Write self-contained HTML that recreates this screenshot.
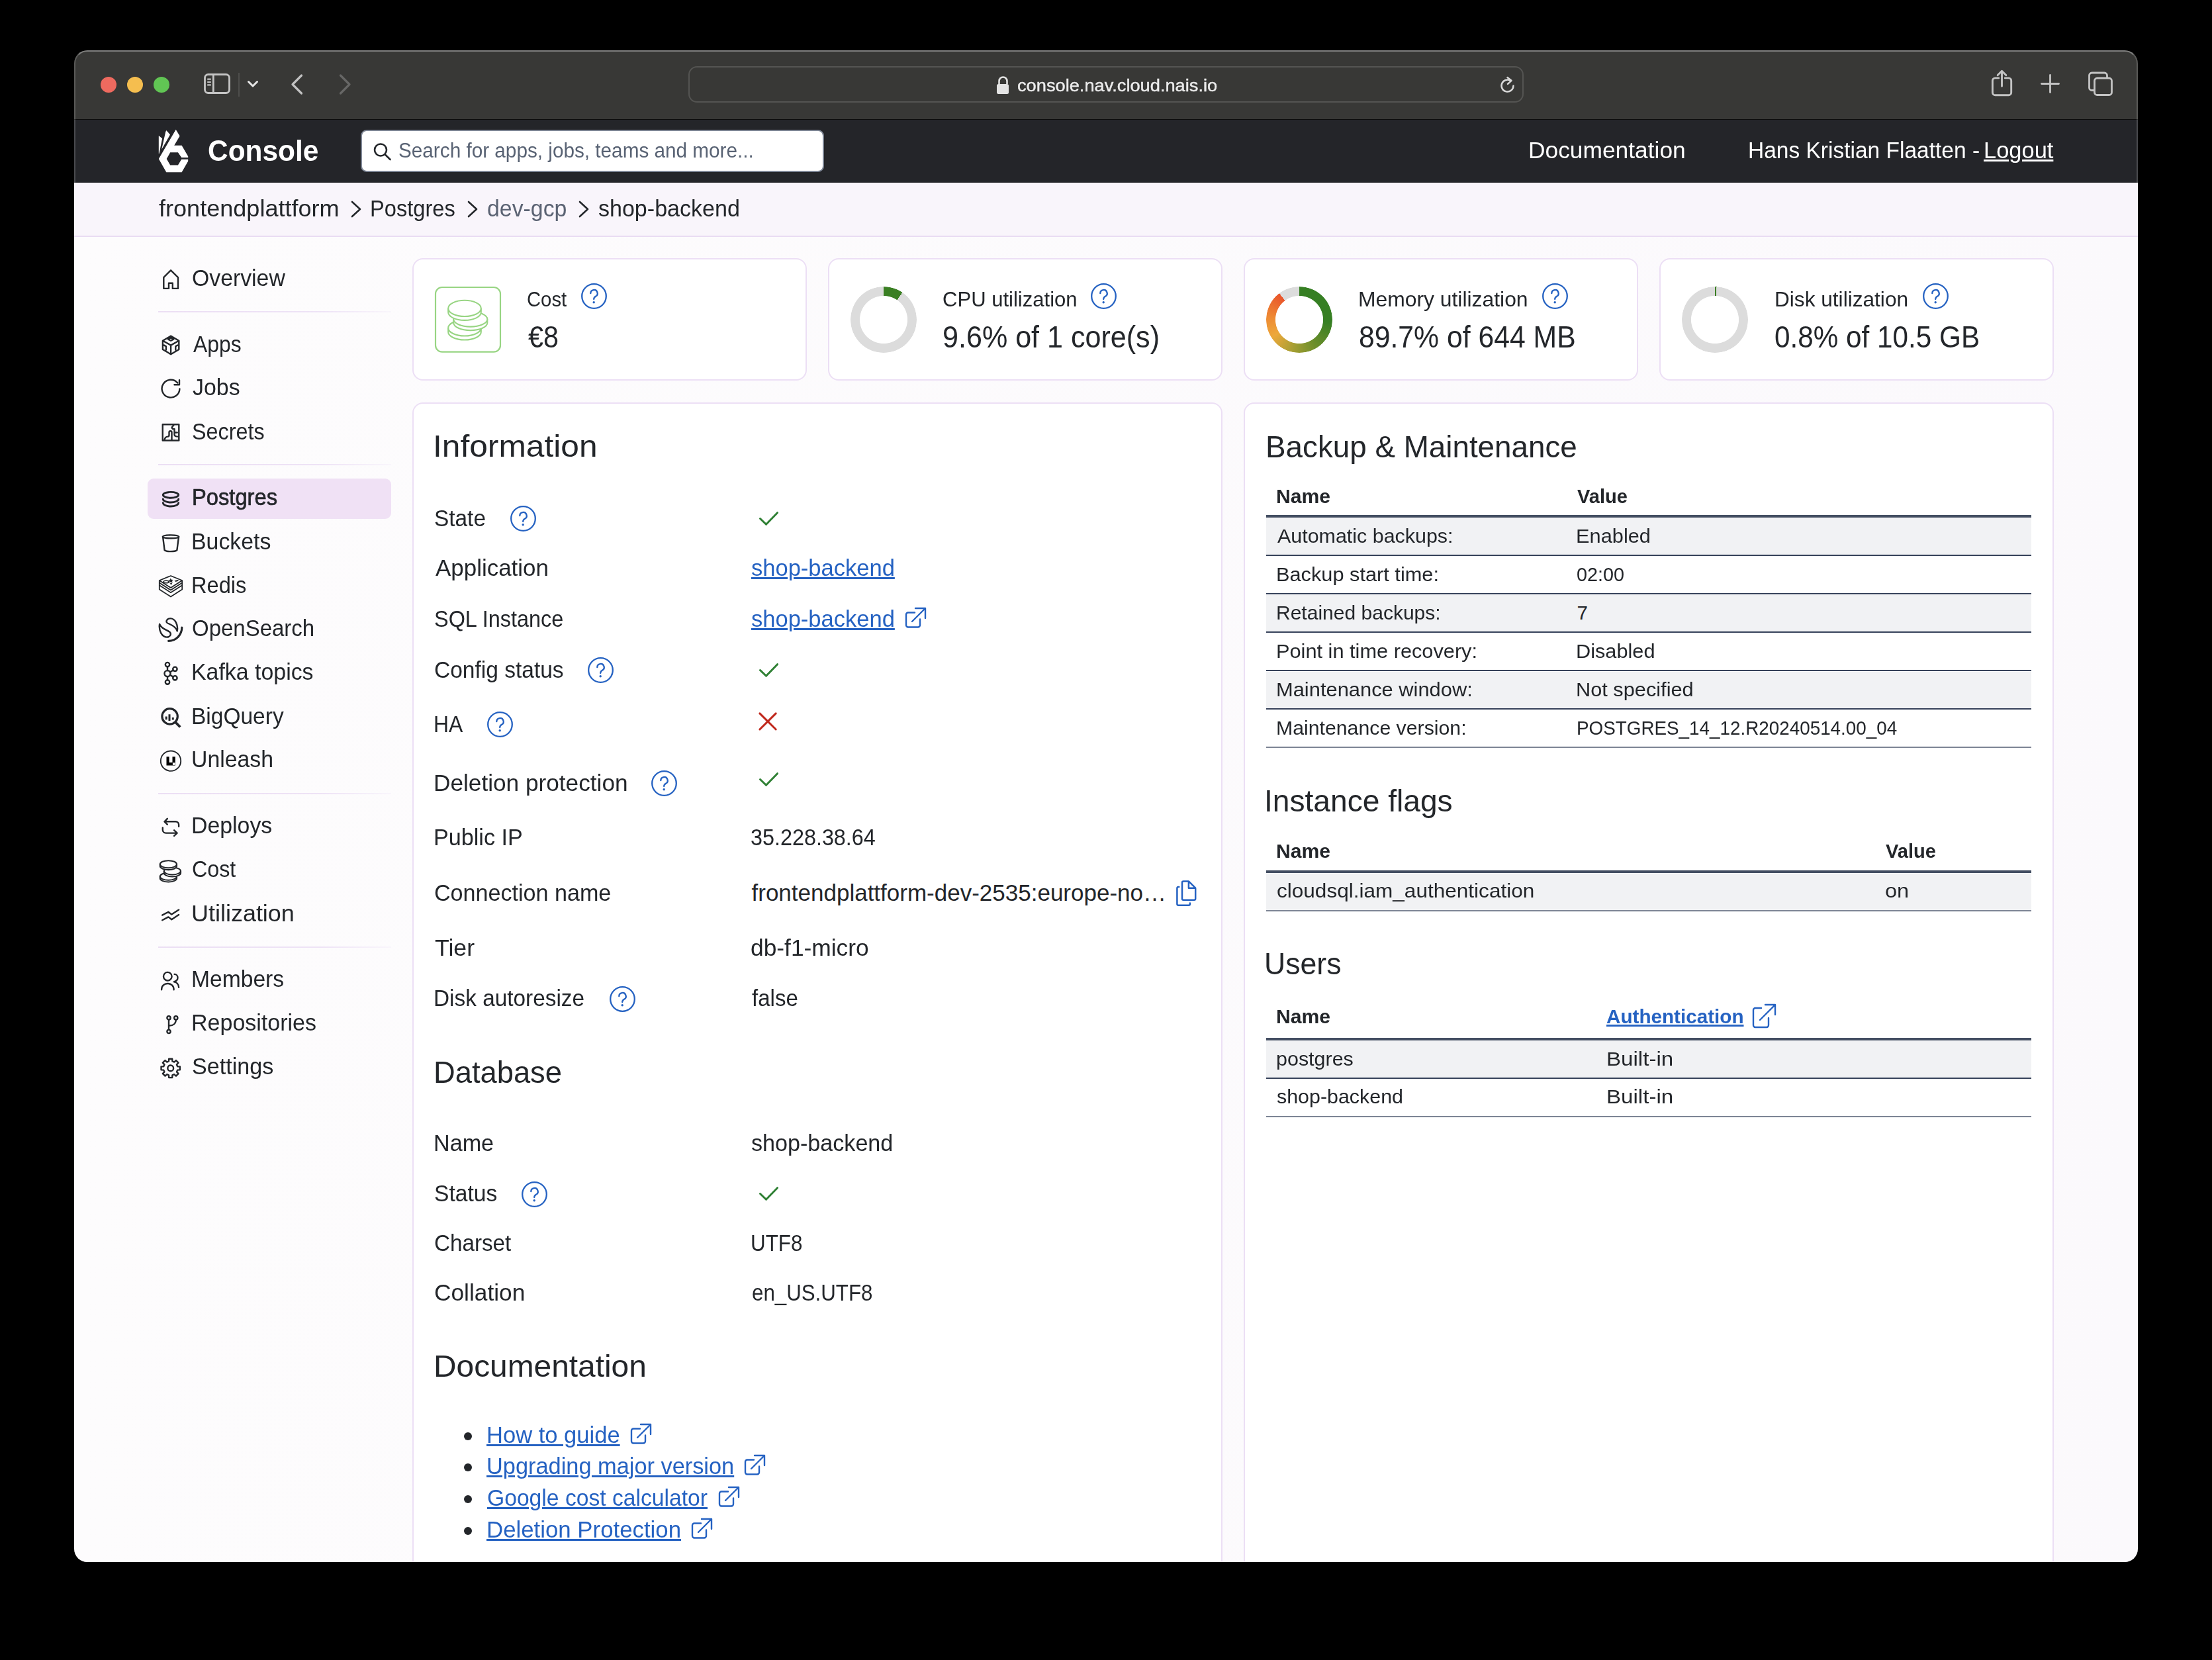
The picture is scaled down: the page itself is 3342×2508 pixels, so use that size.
<!DOCTYPE html>
<html><head><meta charset="utf-8"><title>Console</title>
<style>
html,body{margin:0;padding:0;background:#000;}
body{width:3342px;height:2508px;overflow:hidden;position:relative;font-family:"Liberation Sans",sans-serif;}
#win{position:absolute;left:0;top:0;width:3342px;height:2508px;clip-path:inset(76px 112px 148px 112px round 20px);}
.t{position:absolute;white-space:pre;transform-origin:0 0;}
svg{display:block;}
#t0{transform:scaleX(1.0470);}
#t1{transform:scaleX(0.9425);}
#t2{transform:scaleX(0.9586);}
#t3{transform:scaleX(0.9957);}
#t4{transform:scaleX(0.9437);}
#t5{transform:scaleX(0.9705);}
#t6{transform:scaleX(1.0305);}
#t7{transform:scaleX(0.9328);}
#t8{transform:scaleX(0.9672);}
#t9{transform:scaleX(0.9724);}
#t10{transform:scaleX(0.9653);}
#t11{transform:scaleX(0.9101);}
#t12{transform:scaleX(0.9681);}
#t13{transform:scaleX(0.9233);}
#t14{transform:scaleX(0.9341);}
#t15{transform:scaleX(0.9667);}
#t16{transform:scaleX(0.9318);}
#t17{transform:scaleX(0.9422);}
#t18{transform:scaleX(0.9679);}
#t19{transform:scaleX(0.9573);}
#t20{transform:scaleX(0.9659);}
#t21{transform:scaleX(0.9672);}
#t22{transform:scaleX(0.9214);}
#t23{transform:scaleX(1.0272);}
#t24{transform:scaleX(0.9606);}
#t25{transform:scaleX(0.9716);}
#t26{transform:scaleX(0.9740);}
#t27{transform:scaleX(0.9590);}
#t28{transform:scaleX(0.8980);}
#t29{transform:scaleX(1.0179);}
#t30{transform:scaleX(0.9364);}
#t31{transform:scaleX(1.0438);}
#t32{transform:scaleX(0.9284);}
#t33{transform:scaleX(1.0366);}
#t34{transform:scaleX(0.9189);}
#t35{transform:scaleX(1.0570);}
#t36{transform:scaleX(0.9538);}
#t37{transform:scaleX(0.9982);}
#t38{transform:scaleX(0.9266);}
#t39{transform:scaleX(0.9577);}
#t40{transform:scaleX(0.9089);}
#t41{transform:scaleX(1.0059);}
#t42{transform:scaleX(0.9752);}
#t43{transform:scaleX(0.9742);}
#t44{transform:scaleX(1.0175);}
#t45{transform:scaleX(0.9532);}
#t46{transform:scaleX(0.9862);}
#t47{transform:scaleX(0.9862);}
#t48{transform:scaleX(0.9238);}
#t49{transform:scaleX(1.0000);}
#t50{transform:scaleX(1.0097);}
#t51{transform:scaleX(0.9438);}
#t52{transform:scaleX(0.9641);}
#t53{transform:scaleX(0.9753);}
#t54{transform:scaleX(0.9747);}
#t55{transform:scaleX(0.9604);}
#t56{transform:scaleX(0.9492);}
#t57{transform:scaleX(0.8964);}
#t58{transform:scaleX(1.0083);}
#t59{transform:scaleX(0.8931);}
#t60{transform:scaleX(1.0181);}
#t61{transform:scaleX(0.9870);}
#t62{transform:scaleX(0.9814);}
#t63{transform:scaleX(0.9616);}
#t64{transform:scaleX(0.9942);}
#t65{transform:scaleX(0.9740);}
#t66{transform:scaleX(1.0221);}
#t67{transform:scaleX(0.9868);}
#t68{transform:scaleX(1.0314);}
#t69{transform:scaleX(1.0433);}
#t70{transform:scaleX(1.0418);}
#t71{transform:scaleX(0.9764);}
#t72{transform:scaleX(1.0175);}
#t74{transform:scaleX(1.0418);}
#t75{transform:scaleX(1.0414);}
#t76{transform:scaleX(1.0462);}
#t77{transform:scaleX(1.0419);}
#t78{transform:scaleX(1.0254);}
#t79{transform:scaleX(0.9432);}
#t80{transform:scaleX(0.9813);}
#t81{transform:scaleX(1.0221);}
#t82{transform:scaleX(0.9868);}
#t83{transform:scaleX(1.0693);}
#t84{transform:scaleX(1.1033);}
#t85{transform:scaleX(0.9487);}
#t86{transform:scaleX(1.0221);}
#t87{transform:scaleX(1.0049);}
#t88{transform:scaleX(1.0327);}
#t89{transform:scaleX(1.1221);}
#t90{transform:scaleX(1.0306);}
#t91{transform:scaleX(1.1221);}
</style></head><body><div id="win">
<div style="position:absolute;left:112px;top:357px;width:3118px;height:2003px;background:linear-gradient(90deg,#fdfcfd 0%,#fbf9fc 100%);"></div>
<div style="position:absolute;left:112px;top:76px;width:3118px;height:104px;background:#383836;"></div>
<div style="position:absolute;left:112px;top:180px;width:3118px;height:1px;background:#0c0c0c;"></div>
<div style="position:absolute;left:112px;top:181px;width:3118px;height:95px;background:#242529;"></div>
<div style="position:absolute;left:112px;top:276px;width:3118px;height:80px;background:#f9f5fb;"></div>
<div style="position:absolute;left:112px;top:356px;width:3118px;height:2px;background:#e9dcf3;"></div>
<div style="position:absolute;left:152px;top:116px;width:24px;height:24px;background:#ee6a5f;border-radius:50%;"></div>
<div style="position:absolute;left:192px;top:116px;width:24px;height:24px;background:#f5be4f;border-radius:50%;"></div>
<div style="position:absolute;left:232px;top:116px;width:24px;height:24px;background:#61c554;border-radius:50%;"></div>
<svg style="position:absolute;left:300px;top:104px;" width="56" height="46" viewBox="0 0 56 46"><rect x="9.5" y="8.5" width="37" height="28" rx="5" fill="none" stroke="#c4c4c4" stroke-width="2.8"/><line x1="22.3" y1="8.5" x2="22.3" y2="36.5" stroke="#c4c4c4" stroke-width="2.8"/><g stroke="#c4c4c4" stroke-width="2.2" stroke-linecap="round"><line x1="14" y1="15.6" x2="18" y2="15.6"/><line x1="14" y1="20" x2="18" y2="20"/><line x1="14" y1="24.4" x2="18" y2="24.4"/></g></svg>
<div style="position:absolute;left:360px;top:110px;width:2px;height:36px;background:#4e4e4c;"></div>
<svg style="position:absolute;left:370px;top:118px;" width="24" height="18" viewBox="0 0 24 18"><path d="M5.5 5.5 L12 12 L18.5 5.5" fill="none" stroke="#e6e6e6" stroke-width="3" stroke-linecap="round" stroke-linejoin="round"/></svg>
<svg style="position:absolute;left:432px;top:108px;" width="34" height="38" viewBox="0 0 34 38"><path d="M23.5 6 L10 19.5 L23.5 33" fill="none" stroke="#c2c2c2" stroke-width="3.2" stroke-linecap="round" stroke-linejoin="round"/></svg>
<svg style="position:absolute;left:504px;top:108px;" width="34" height="38" viewBox="0 0 34 38"><path d="M10.5 6 L24 19.5 L10.5 33" fill="none" stroke="#676766" stroke-width="3.2" stroke-linecap="round" stroke-linejoin="round"/></svg>
<div style="position:absolute;left:1040px;top:100px;width:1262px;height:55px;box-sizing:border-box;border:2px solid #545452;border-radius:13px;"></div>
<svg style="position:absolute;left:1500px;top:112px;" width="30" height="34" viewBox="0 0 30 34"><path d="M9.5 15 V10.5 a6 6 0 0 1 12 0 V15" fill="none" stroke="#e3e3e3" stroke-width="2.6"/><rect x="6" y="15" width="18" height="15" rx="2.5" fill="#e3e3e3"/></svg>
<div id="t0" class="t " style="left:1536.95px;top:115.50px;font-size:26px;line-height:26px;color:#ececec;-webkit-text-stroke:0.4px #ececec;">console.nav.cloud.nais.io</div>
<svg style="position:absolute;left:2260px;top:112px;" width="36" height="36" viewBox="0 0 36 36"><path d="M26.5 17.5 a9 9 0 1 1 -4.2 -7.6" fill="none" stroke="#d8d8d8" stroke-width="2.5" stroke-linecap="round"/><path d="M17.5 5 L23.5 9.8 L18 14.8" fill="none" stroke="#d8d8d8" stroke-width="2.5" stroke-linecap="round" stroke-linejoin="round"/></svg>
<svg style="position:absolute;left:2996px;top:100px;" width="56" height="52" viewBox="0 0 56 52"><path d="M23.8 17.9 H18.4 a4 4 0 0 0 -4 4 V39.7 a4 4 0 0 0 4 4 H38.7 a4 4 0 0 0 4 -4 V21.9 a4 4 0 0 0 -4 -4 H33.3" fill="none" stroke="#c4c4c4" stroke-width="2.9" stroke-linecap="round"/><path d="M28.5 30.3 V7.5 M22.2 13.6 L28.5 7.2 L34.8 13.6" fill="none" stroke="#c4c4c4" stroke-width="2.9" stroke-linecap="round" stroke-linejoin="round"/></svg>
<svg style="position:absolute;left:3070px;top:100px;" width="56" height="52" viewBox="0 0 56 52"><path d="M27.5 13.5 V39.5 M14.5 26.5 H40.5" stroke="#c4c4c4" stroke-width="2.8" stroke-linecap="round"/></svg>
<svg style="position:absolute;left:3146px;top:100px;" width="56" height="52" viewBox="0 0 56 52"><path d="M18 36.5 H14.5 a4 4 0 0 1 -4 -4 V14 a4 4 0 0 1 4 -4 H33.5 a4 4 0 0 1 4 4 V17.5" fill="none" stroke="#c4c4c4" stroke-width="2.8"/><rect x="18.5" y="18" width="26" height="25.5" rx="4" fill="none" stroke="#c4c4c4" stroke-width="2.8"/></svg>
<svg style="position:absolute;left:230px;top:190px;" width="70" height="76" viewBox="0 0 70 76"><path fill="#fff" fill-rule="evenodd" d="M35.7 5.7 L41.6 15.6 L33.2 29.7 L44.6 29.8 L54.2 46.3 V48.1 H44.2 L38.9 40.3 H27.2 L21.7 49.9 L27.2 59.5 H38.9 L44.2 50.8 H54.2 V53.5 L44.6 70.2 H21.3 L9.8 49.9 Z"/><path fill="#fff" d="M9.8 14.9 L15.1 19.2 L10.5 42.1 L9.8 42.1 Z"/><path fill="#fff" d="M21.3 6.9 L27 13.5 L14.2 35.7 L20.2 9.2 Z"/></svg>
<div id="t1" class="t " style="left:314.11px;top:205.25px;font-size:45px;line-height:45px;color:#ffffff;font-weight:700;">Console</div>
<div style="position:absolute;left:545px;top:196px;width:700px;height:64px;box-sizing:border-box;background:#fff;border:2.5px solid #7d8594;border-radius:9px;"></div>
<svg style="position:absolute;left:558px;top:210px;" width="40" height="40" viewBox="0 0 40 40"><circle cx="17" cy="16.5" r="9" fill="none" stroke="#23262a" stroke-width="2.6"/><path d="M23.6 23.2 L31.5 31" stroke="#23262a" stroke-width="2.6" stroke-linecap="round"/></svg>
<div id="t2" class="t " style="left:602.28px;top:211.65px;font-size:31px;line-height:31px;color:#596374;">Search for apps, jobs, teams and more...</div>
<div id="t3" class="t " style="left:2309.01px;top:209.82px;font-size:35.5px;line-height:35.5px;color:#ffffff;">Documentation</div>
<div id="t4" class="t " style="left:2641.17px;top:209.82px;font-size:35.5px;line-height:35.5px;color:#ffffff;">Hans Kristian Flaatten -</div>
<div id="t5" class="t " style="left:2996.69px;top:209.82px;font-size:35.5px;line-height:35.5px;color:#ffffff;text-decoration:underline;text-decoration-thickness:2.8px;text-underline-offset:1.5px;">Logout</div>
<div id="t6" class="t " style="left:240.20px;top:296.65px;font-size:35px;line-height:35px;color:#23262a;">frontendplattform</div>
<svg style="position:absolute;left:528px;top:301px;" width="20" height="30" viewBox="0 0 20 30"><path d="M4 4 L16 15.0 L4 26" fill="none" stroke="#23262a" stroke-width="2.6" stroke-linecap="round" stroke-linejoin="round"/></svg>
<div id="t7" class="t " style="left:559.20px;top:296.65px;font-size:35px;line-height:35px;color:#23262a;">Postgres</div>
<svg style="position:absolute;left:704px;top:301px;" width="20" height="30" viewBox="0 0 20 30"><path d="M4 4 L16 15.0 L4 26" fill="none" stroke="#23262a" stroke-width="2.6" stroke-linecap="round" stroke-linejoin="round"/></svg>
<div id="t8" class="t " style="left:736.03px;top:296.65px;font-size:35px;line-height:35px;color:#5b6373;">dev-gcp</div>
<svg style="position:absolute;left:872px;top:301px;" width="20" height="30" viewBox="0 0 20 30"><path d="M4 4 L16 15.0 L4 26" fill="none" stroke="#23262a" stroke-width="2.6" stroke-linecap="round" stroke-linejoin="round"/></svg>
<div id="t9" class="t " style="left:904.03px;top:296.65px;font-size:35px;line-height:35px;color:#23262a;">shop-backend</div>
<div style="position:absolute;left:223px;top:722.5px;width:368px;height:61px;background:#f0e1f5;border-radius:9px;"></div>
<div id="t10" class="t " style="left:290.27px;top:402.05px;font-size:35px;line-height:35px;color:#23262a;">Overview</div>
<div id="t11" class="t " style="left:292.20px;top:501.55px;font-size:35px;line-height:35px;color:#23262a;">Apps</div>
<div id="t12" class="t " style="left:291.23px;top:566.65px;font-size:35px;line-height:35px;color:#23262a;">Jobs</div>
<div id="t13" class="t " style="left:290.35px;top:633.65px;font-size:35px;line-height:35px;color:#23262a;">Secrets</div>
<div id="t14" class="t " style="left:290.33px;top:733.25px;font-size:35px;line-height:35px;color:#23262a;-webkit-text-stroke:0.7px #23262a;">Postgres</div>
<div id="t15" class="t " style="left:289.30px;top:799.85px;font-size:35px;line-height:35px;color:#23262a;">Buckets</div>
<div id="t16" class="t " style="left:289.40px;top:866.25px;font-size:35px;line-height:35px;color:#23262a;">Redis</div>
<div id="t17" class="t " style="left:290.32px;top:931.25px;font-size:35px;line-height:35px;color:#23262a;">OpenSearch</div>
<div id="t18" class="t " style="left:289.30px;top:997.25px;font-size:35px;line-height:35px;color:#23262a;">Kafka topics</div>
<div id="t19" class="t " style="left:289.33px;top:1063.95px;font-size:35px;line-height:35px;color:#23262a;">BigQuery</div>
<div id="t20" class="t " style="left:289.30px;top:1129.25px;font-size:35px;line-height:35px;color:#23262a;">Unleash</div>
<div id="t21" class="t " style="left:289.30px;top:1229.25px;font-size:35px;line-height:35px;color:#23262a;">Deploys</div>
<div id="t22" class="t " style="left:290.36px;top:1295.25px;font-size:35px;line-height:35px;color:#23262a;">Cost</div>
<div id="t23" class="t " style="left:289.12px;top:1361.75px;font-size:35px;line-height:35px;color:#23262a;">Utilization</div>
<div id="t24" class="t " style="left:289.32px;top:1461.25px;font-size:35px;line-height:35px;color:#23262a;">Members</div>
<div id="t25" class="t " style="left:289.29px;top:1526.85px;font-size:35px;line-height:35px;color:#23262a;">Repositories</div>
<div id="t26" class="t " style="left:290.25px;top:1593.25px;font-size:35px;line-height:35px;color:#23262a;">Settings</div>
<div style="position:absolute;left:239px;top:470px;width:352px;height:2px;background:linear-gradient(90deg,#ecdff4 0%,#eee3f6 70%,rgba(240,232,248,0.3) 100%);"></div>
<div style="position:absolute;left:239px;top:701.4px;width:352px;height:2px;background:linear-gradient(90deg,#ecdff4 0%,#eee3f6 70%,rgba(240,232,248,0.3) 100%);"></div>
<div style="position:absolute;left:239px;top:1197.8px;width:352px;height:2px;background:linear-gradient(90deg,#ecdff4 0%,#eee3f6 70%,rgba(240,232,248,0.3) 100%);"></div>
<div style="position:absolute;left:239px;top:1429.5px;width:352px;height:2px;background:linear-gradient(90deg,#ecdff4 0%,#eee3f6 70%,rgba(240,232,248,0.3) 100%);"></div>
<svg style="position:absolute;left:240px;top:401.8px;overflow:visible;" width="40" height="40" viewBox="0 0 40 40"><path fill="none" stroke="#23262a" stroke-width="2.4" stroke-linejoin="round" stroke-linecap="round" stroke-linejoin="miter" d="M18.1 6.3 L7.3 17.1 V33.9 H15 V25.7 H20.8 V33.9 H29 V17.1 Z"/></svg>
<svg style="position:absolute;left:240px;top:501.29999999999995px;overflow:visible;" width="40" height="40" viewBox="0 0 40 40"><path fill="none" stroke="#23262a" stroke-width="2.4" stroke-linejoin="round" stroke-linecap="round" d="M18.1 6.6 L30.3 13.8 V27 L18.1 34.2 L5.9 27 V13.8 Z M5.9 13.8 L18.1 20.6 L30.3 13.8 M18.1 20.6 V34.2 M14.1 11.6 L18.1 9.3 L22.1 11.6 L18.1 13.8 Z M7.9 20.6 L10.9 22.3 V27.6 M28.3 20.6 L25.3 22.3 V27.6"/></svg>
<svg style="position:absolute;left:240px;top:566.4px;overflow:visible;" width="40" height="40" viewBox="0 0 40 40"><path fill="none" stroke="#23262a" stroke-width="2.4" stroke-linejoin="round" stroke-linecap="round" d="M31.4 21.4 A13.4 13.4 0 1 1 28.3 12.6"/><path fill="none" stroke="#23262a" stroke-width="2.4" stroke-linejoin="round" stroke-linecap="round" d="M31 8.1 V15.3 H23.5"/></svg>
<svg style="position:absolute;left:240px;top:633.4px;overflow:visible;" width="40" height="40" viewBox="0 0 40 40"><rect fill="none" stroke="#23262a" stroke-width="2.4" stroke-linejoin="round" stroke-linecap="round" x="5.75" y="8.2" width="24.55" height="24.3"/><path fill="none" stroke="#23262a" stroke-width="2.4" stroke-linejoin="round" stroke-linecap="round" d="M8.6 31.4 C9 28 11 26.8 13.7 26.6 C15 26.5 15.5 25.5 15.5 24 V19.8 C15.5 18.8 16.5 18.3 17.5 18.3 C18.6 18.3 19.5 19 19.5 20 V31.4 M22.4 9.3 L19.8 12.4 C19.5 13.5 20.5 15.1 21.5 15.1 H23.5 V23.4 C23.5 25.5 26 26.6 29.2 26.6 M24.9 20.5 H27.8"/></svg>
<svg style="position:absolute;left:240px;top:733px;overflow:visible;" width="40" height="40" viewBox="0 0 40 40"><ellipse fill="none" stroke="#23262a" stroke-width="2.9" stroke-linejoin="round" stroke-linecap="round" cx="18" cy="14.8" rx="11.7" ry="4.4"/><path fill="none" stroke="#23262a" stroke-width="2.9" stroke-linejoin="round" stroke-linecap="round" d="M6.3 21 A11.7 5 0 0 0 29.7 21 M6.3 26.8 A11.7 5.2 0 0 0 29.7 26.8"/></svg>
<svg style="position:absolute;left:240px;top:799.6px;overflow:visible;" width="40" height="40" viewBox="0 0 40 40"><path fill="none" stroke="#23262a" stroke-width="2.4" stroke-linejoin="round" stroke-linecap="round" d="M5.8 11 C7 7.5 29 7.5 30.3 11 C29 14 7 14 5.8 11 Z M6.2 12 L8.6 31.2 C12 33.8 24 33.8 27.4 31.2 L29.9 12"/></svg>
<svg style="position:absolute;left:240px;top:866px;overflow:visible;" width="40" height="40" viewBox="0 0 40 40"><g fill="none" stroke="#23262a" stroke-width="1.8" stroke-linejoin="round"><path fill="#fff" d="M0.8 11 V24.5 L18 35.5 L35.2 24.5 V11 L18 4 Z"/><path d="M0.8 11 L18 22 L35.2 11 M0.8 14.6 L18 25.6 L35.2 14.6 M0.8 18.3 L18 29.3 L35.2 18.3"/></g><path fill="#23262a" d="M17.5 7.5 l1.6 2.2 2.6 0.2 -1.7 1.8 0.6 2.5 -2.4 -1 -2.3 1.2 0.4 -2.6 -1.9 -1.8 2.6 -0.3 z M23.5 11.5 l4.8 -1.4 2 1.3 -4.8 1.5 z"/><ellipse cx="11" cy="13" rx="4" ry="1.8" fill="none" stroke="#23262a" stroke-width="1.6"/><path fill="#23262a" d="M16.5 15.5 L20.5 14.2 L18.8 17.8 Z"/></svg>
<svg style="position:absolute;left:240px;top:931px;overflow:visible;" width="40" height="40" viewBox="0 0 40 40"><path fill="none" stroke="#23262a" stroke-width="2.4" stroke-linejoin="round" stroke-linecap="round" stroke-width="2" d="M27.7 22.5 C29.5 13 24.5 3.4 17.5 3.4 C13 3.4 10.5 7 12 9.5 C13.5 12 25 13 27.7 22.5 Z M1.1 12 C-0.5 22 5 31.6 12 31.6 C17 31.6 19 27.5 17 24.5 C14.5 21 4 20 1.1 12 Z"/><path fill="none" stroke="#23262a" stroke-width="3.2" stroke-linecap="round" d="M34.8 17 C34.8 28 26 37.3 14.6 37.3"/></svg>
<svg style="position:absolute;left:240px;top:997px;overflow:visible;" width="40" height="40" viewBox="0 0 40 40"><g fill="none" stroke="#23262a" stroke-width="2.4" stroke-linejoin="round" stroke-linecap="round" stroke-width="2.6"><circle cx="13" cy="7.1" r="3.2"/><circle cx="13" cy="33.6" r="3.2"/><circle cx="13" cy="20.6" r="4.5"/><circle cx="24.4" cy="13.8" r="3.2"/><circle cx="24.4" cy="27.3" r="3.2"/><path d="M13 10.3 V16.1 M13 25.1 V30.4 M16.9 18.4 L21.6 15.5 M16.9 22.8 L21.6 25.6"/></g></svg>
<svg style="position:absolute;left:240px;top:1063.7px;overflow:visible;" width="40" height="40" viewBox="0 0 40 40"><circle fill="none" stroke="#23262a" stroke-width="3.2" cx="16.6" cy="18.4" r="11.7"/><path stroke="#23262a" stroke-width="3.8" stroke-linecap="butt" d="M25 27.2 L32.3 34.5"/><path stroke="#23262a" stroke-width="3" d="M11.2 18.4 V23.3 M16 15.2 V24.9 M21.3 20 V23.6"/></svg>
<svg style="position:absolute;left:240px;top:1129px;overflow:visible;" width="40" height="40" viewBox="0 0 40 40"><circle fill="none" stroke="#23262a" stroke-width="1.9" cx="18" cy="20.7" r="15.2"/><path fill="#000" d="M11.5 14.3 H15.6 V22.9 H20.5 V14.3 H24.8 V27.6 H11.5 Z"/><rect x="20.9" y="23.3" width="3.5" height="3.6" fill="#fff"/></svg>
<svg style="position:absolute;left:240px;top:1229px;overflow:visible;" width="40" height="40" viewBox="0 0 40 40"><path fill="none" stroke="#23262a" stroke-width="2.4" stroke-linejoin="round" stroke-linecap="round" d="M9 12.3 H25.3 C28 12.3 30.1 14.3 30.1 17 V19.8 M12.8 7.8 L8.5 12.3 L12.8 16.6 M5.8 21.5 V24.8 C5.8 27.5 8 29.6 10.7 29.6 H27.4 M23.1 25.3 L27.6 29.6 L23.1 33.9"/></svg>
<svg style="position:absolute;left:240px;top:1295px;overflow:visible;" width="40" height="40" viewBox="0 0 40 40"><g fill="#fff" stroke="#23262a" stroke-width="2.1"><path d="M1.8 29.2 V32 A12.6 5.5 0 0 0 27 32 V29.2"/><ellipse cx="14.4" cy="29.2" rx="12.6" ry="5.5"/><path d="M7.8 21 V24 A12.6 5.5 0 0 0 33 24 V21"/><ellipse cx="20.4" cy="21" rx="12.6" ry="5.5"/><path d="M1.8 10.7 V13.6 A12.6 5.5 0 0 0 27 13.6 V10.7"/><ellipse cx="14.4" cy="10.7" rx="12.6" ry="5.5"/></g></svg>
<svg style="position:absolute;left:240px;top:1361.5px;overflow:visible;" width="40" height="40" viewBox="0 0 40 40"><path fill="none" stroke="#23262a" stroke-width="2.4" stroke-linejoin="round" stroke-linecap="round" stroke-width="2.7" stroke-linejoin="miter" d="M5.2 20.6 L14.4 15.8 L19.3 19.6 L30.1 12.5 M5.2 28.2 L14.4 23.4 L19.3 27.2 L30.1 20.1"/></svg>
<svg style="position:absolute;left:240px;top:1461px;overflow:visible;" width="40" height="40" viewBox="0 0 40 40"><circle fill="none" stroke="#23262a" stroke-width="2.4" stroke-linejoin="round" stroke-linecap="round" cx="13.3" cy="14.2" r="6.3"/><path fill="none" stroke="#23262a" stroke-width="2.4" stroke-linejoin="round" stroke-linecap="round" d="M4.1 34.2 C4.1 28.5 8.2 25 13.3 25 C18.4 25 22.6 28.5 22.6 34.2 M23.6 10.9 C26.5 11 28.5 13.3 28.5 16.3 C28.5 19.5 26 21.5 22.8 22.3 C26.8 23 30.1 26 30.1 30.8"/></svg>
<svg style="position:absolute;left:240px;top:1526.6px;overflow:visible;" width="40" height="40" viewBox="0 0 40 40"><g fill="none" stroke="#23262a" stroke-width="2.4" stroke-linejoin="round" stroke-linecap="round"><circle cx="15" cy="10.9" r="2.6"/><circle cx="15" cy="31.5" r="2.6"/><circle cx="25.8" cy="10.9" r="2.6"/><path d="M15 13.5 V28.9 M25.8 13.5 C25.8 19.5 21.5 22.8 15.3 22.8"/></g></svg>
<svg style="position:absolute;left:240px;top:1593px;overflow:visible;" width="40" height="40" viewBox="0 0 40 40"><circle fill="none" stroke="#23262a" stroke-width="2.4" stroke-linejoin="round" stroke-linecap="round" cx="17.7" cy="20.9" r="4.4"/><path fill="none" stroke="#23262a" stroke-width="2.4" stroke-linejoin="round" stroke-linecap="round" d="M15.00 10.44 L15.20 6.72 L20.20 6.72 L20.40 10.44 L23.18 11.59 L25.96 9.10 L29.50 12.64 L27.01 15.42 L28.16 18.20 L31.88 18.40 L31.88 23.40 L28.16 23.60 L27.01 26.38 L29.50 29.16 L25.96 32.70 L23.18 30.21 L20.40 31.36 L20.20 35.08 L15.20 35.08 L15.00 31.36 L12.22 30.21 L9.44 32.70 L5.90 29.16 L8.39 26.38 L7.24 23.60 L3.52 23.40 L3.52 18.40 L7.24 18.20 L8.39 15.42 L5.90 12.64 L9.44 9.10 L12.22 11.59 Z"/></svg>
<div style="position:absolute;left:623px;top:390px;width:596px;height:185px;box-sizing:border-box;background:#fff;border:2px solid #ecdff5;border-radius:16px;"></div>
<div style="position:absolute;left:1251px;top:390px;width:596px;height:185px;box-sizing:border-box;background:#fff;border:2px solid #ecdff5;border-radius:16px;"></div>
<div style="position:absolute;left:1879px;top:390px;width:596px;height:185px;box-sizing:border-box;background:#fff;border:2px solid #ecdff5;border-radius:16px;"></div>
<div style="position:absolute;left:2507px;top:390px;width:596px;height:185px;box-sizing:border-box;background:#fff;border:2px solid #ecdff5;border-radius:16px;"></div>
<svg style="position:absolute;left:650px;top:425px;" width="115" height="115" viewBox="0 0 115 115"><rect x="8" y="9" width="98" height="97.7" rx="10" fill="none" stroke="#98d583" stroke-width="2.2"/><g fill="#fff" stroke="#98d583" stroke-width="2.1"><path d="M27.2 70.5 V76.5 A24.8 12 0 0 0 76.8 76.5 V70.5"/><ellipse cx="52" cy="70.5" rx="24.8" ry="12"/><path d="M35.3 57.3 V62.8 A25.5 11.3 0 0 0 86.3 62.8 V57.3"/><ellipse cx="60.8" cy="57.3" rx="25.5" ry="11.3"/><path d="M27.2 40.9 V46.8 A24.8 12.1 0 0 0 76.8 46.8 V40.9"/><ellipse cx="52" cy="40.9" rx="24.8" ry="12.1"/></g></svg>
<div id="t27" class="t " style="left:796.08px;top:436.57px;font-size:30.5px;line-height:30.5px;color:#23262a;">Cost</div>
<svg style="position:absolute;left:878.4px;top:428.2px;" width="39" height="39" viewBox="0 0 39 39"><circle cx="19.5" cy="19.5" r="18.3" fill="none" stroke="#2562c2" stroke-width="2.3"/><path d="M14.3 15.2 a5.2 5.2 0 1 1 7.6 4.6 C19.7 21.0 19.2 22.3 19.2 24.1" fill="none" stroke="#2562c2" stroke-width="2.3" stroke-linecap="round"/><circle cx="19.2" cy="28.8" r="1.7" fill="#2562c2"/></svg>
<div id="t28" class="t " style="left:798.00px;top:486.40px;font-size:46px;line-height:46px;color:#23262a;">€8</div>
<div style="position:absolute;left:1285.2px;top:433.2px;width:99.6px;height:99.6px;border-radius:50%;background:conic-gradient(#3a7f23 0deg 34.6deg,#dcdcdc 34.6deg 360deg);-webkit-mask:radial-gradient(circle,transparent 35.6px,#000 36.4px);mask:radial-gradient(circle,transparent 35.6px,#000 36.4px);"></div>
<div id="t29" class="t " style="left:1423.96px;top:436.57px;font-size:30.5px;line-height:30.5px;color:#23262a;">CPU utilization</div>
<svg style="position:absolute;left:1648.1px;top:428.2px;" width="39" height="39" viewBox="0 0 39 39"><circle cx="19.5" cy="19.5" r="18.3" fill="none" stroke="#2562c2" stroke-width="2.3"/><path d="M14.3 15.2 a5.2 5.2 0 1 1 7.6 4.6 C19.7 21.0 19.2 22.3 19.2 24.1" fill="none" stroke="#2562c2" stroke-width="2.3" stroke-linecap="round"/><circle cx="19.2" cy="28.8" r="1.7" fill="#2562c2"/></svg>
<div id="t30" class="t " style="left:1424.13px;top:486.40px;font-size:46px;line-height:46px;color:#23262a;">9.6% of 1 core(s)</div>
<div style="position:absolute;left:1913.2px;top:433.2px;width:99.6px;height:99.6px;border-radius:50%;background:conic-gradient(#367f23 0deg,#367f23 95deg,#6f8f2c 150deg,#a39e33 190deg,#eda83b 238deg,#ee8a33 275deg,#e9552b 323deg,#dcdcdc 323deg 360deg);-webkit-mask:radial-gradient(circle,transparent 35.6px,#000 36.4px);mask:radial-gradient(circle,transparent 35.6px,#000 36.4px);"></div>
<div id="t31" class="t " style="left:2052.31px;top:436.57px;font-size:30.5px;line-height:30.5px;color:#23262a;">Memory utilization</div>
<svg style="position:absolute;left:2329.5px;top:428.2px;" width="39" height="39" viewBox="0 0 39 39"><circle cx="19.5" cy="19.5" r="18.3" fill="none" stroke="#2562c2" stroke-width="2.3"/><path d="M14.3 15.2 a5.2 5.2 0 1 1 7.6 4.6 C19.7 21.0 19.2 22.3 19.2 24.1" fill="none" stroke="#2562c2" stroke-width="2.3" stroke-linecap="round"/><circle cx="19.2" cy="28.8" r="1.7" fill="#2562c2"/></svg>
<div id="t32" class="t " style="left:2052.54px;top:486.40px;font-size:46px;line-height:46px;color:#23262a;">89.7% of 644 MB</div>
<div style="position:absolute;left:2541.2px;top:433.2px;width:99.6px;height:99.6px;border-radius:50%;background:conic-gradient(#3a7f23 0deg 2.9deg,#dcdcdc 2.9deg 360deg);-webkit-mask:radial-gradient(circle,transparent 35.6px,#000 36.4px);mask:radial-gradient(circle,transparent 35.6px,#000 36.4px);"></div>
<div id="t33" class="t " style="left:2680.93px;top:436.57px;font-size:30.5px;line-height:30.5px;color:#23262a;">Disk utilization</div>
<svg style="position:absolute;left:2904.5px;top:428.2px;" width="39" height="39" viewBox="0 0 39 39"><circle cx="19.5" cy="19.5" r="18.3" fill="none" stroke="#2562c2" stroke-width="2.3"/><path d="M14.3 15.2 a5.2 5.2 0 1 1 7.6 4.6 C19.7 21.0 19.2 22.3 19.2 24.1" fill="none" stroke="#2562c2" stroke-width="2.3" stroke-linecap="round"/><circle cx="19.2" cy="28.8" r="1.7" fill="#2562c2"/></svg>
<div id="t34" class="t " style="left:2681.16px;top:486.40px;font-size:46px;line-height:46px;color:#23262a;">0.8% of 10.5 GB</div>
<div style="position:absolute;left:623px;top:608px;width:1224px;height:1800px;box-sizing:border-box;background:#fff;border:2px solid #ecdff5;border-radius:16px;"></div>
<div style="position:absolute;left:1879px;top:608px;width:1224px;height:1800px;box-sizing:border-box;background:#fff;border:2px solid #ecdff5;border-radius:16px;"></div>
<div id="t35" class="t " style="left:654.37px;top:650.45px;font-size:47px;line-height:47px;color:#23262a;">Information</div>
<div id="t36" class="t " style="left:656.09px;top:764.85px;font-size:35px;line-height:35px;color:#23262a;">State</div>
<svg style="position:absolute;left:770.5px;top:764.3000000000001px;" width="39" height="39" viewBox="0 0 39 39"><circle cx="19.5" cy="19.5" r="18.3" fill="none" stroke="#2562c2" stroke-width="2.3"/><path d="M14.3 15.2 a5.2 5.2 0 1 1 7.6 4.6 C19.7 21.0 19.2 22.3 19.2 24.1" fill="none" stroke="#2562c2" stroke-width="2.3" stroke-linecap="round"/><circle cx="19.2" cy="28.8" r="1.7" fill="#2562c2"/></svg>
<div id="t37" class="t " style="left:658.00px;top:840.25px;font-size:35px;line-height:35px;color:#23262a;">Application</div>
<div id="t38" class="t " style="left:656.15px;top:917.15px;font-size:35px;line-height:35px;color:#23262a;">SQL Instance</div>
<div id="t39" class="t " style="left:656.08px;top:993.85px;font-size:35px;line-height:35px;color:#23262a;">Config status</div>
<svg style="position:absolute;left:888.3px;top:993.3000000000001px;" width="39" height="39" viewBox="0 0 39 39"><circle cx="19.5" cy="19.5" r="18.3" fill="none" stroke="#2562c2" stroke-width="2.3"/><path d="M14.3 15.2 a5.2 5.2 0 1 1 7.6 4.6 C19.7 21.0 19.2 22.3 19.2 24.1" fill="none" stroke="#2562c2" stroke-width="2.3" stroke-linecap="round"/><circle cx="19.2" cy="28.8" r="1.7" fill="#2562c2"/></svg>
<div id="t40" class="t " style="left:655.27px;top:1075.55px;font-size:35px;line-height:35px;color:#23262a;">HA</div>
<svg style="position:absolute;left:736.3px;top:1075.0px;" width="39" height="39" viewBox="0 0 39 39"><circle cx="19.5" cy="19.5" r="18.3" fill="none" stroke="#2562c2" stroke-width="2.3"/><path d="M14.3 15.2 a5.2 5.2 0 1 1 7.6 4.6 C19.7 21.0 19.2 22.3 19.2 24.1" fill="none" stroke="#2562c2" stroke-width="2.3" stroke-linecap="round"/><circle cx="19.2" cy="28.8" r="1.7" fill="#2562c2"/></svg>
<div id="t41" class="t " style="left:654.98px;top:1164.85px;font-size:35px;line-height:35px;color:#23262a;">Deletion protection</div>
<svg style="position:absolute;left:984.2px;top:1164.3px;" width="39" height="39" viewBox="0 0 39 39"><circle cx="19.5" cy="19.5" r="18.3" fill="none" stroke="#2562c2" stroke-width="2.3"/><path d="M14.3 15.2 a5.2 5.2 0 1 1 7.6 4.6 C19.7 21.0 19.2 22.3 19.2 24.1" fill="none" stroke="#2562c2" stroke-width="2.3" stroke-linecap="round"/><circle cx="19.2" cy="28.8" r="1.7" fill="#2562c2"/></svg>
<div id="t42" class="t " style="left:655.07px;top:1247.25px;font-size:35px;line-height:35px;color:#23262a;">Public IP</div>
<div id="t43" class="t " style="left:656.05px;top:1331.25px;font-size:35px;line-height:35px;color:#23262a;">Connection name</div>
<div id="t44" class="t " style="left:656.98px;top:1413.75px;font-size:35px;line-height:35px;color:#23262a;">Tier</div>
<div id="t45" class="t " style="left:655.14px;top:1490.25px;font-size:35px;line-height:35px;color:#23262a;">Disk autoresize</div>
<svg style="position:absolute;left:920.7px;top:1489.7px;" width="39" height="39" viewBox="0 0 39 39"><circle cx="19.5" cy="19.5" r="18.3" fill="none" stroke="#2562c2" stroke-width="2.3"/><path d="M14.3 15.2 a5.2 5.2 0 1 1 7.6 4.6 C19.7 21.0 19.2 22.3 19.2 24.1" fill="none" stroke="#2562c2" stroke-width="2.3" stroke-linecap="round"/><circle cx="19.2" cy="28.8" r="1.7" fill="#2562c2"/></svg>
<svg style="position:absolute;left:1145px;top:768.6px;" width="34" height="30" viewBox="0 0 34 30"><path d="M5 12 L14 20.8 L31 3.2" fill="none" stroke="#2f8034" stroke-width="3" stroke-linecap="round" stroke-linejoin="round" transform="translate(-1.5,2.5)"/></svg>
<div id="t46" class="t " style="left:1134.51px;top:840.25px;font-size:35px;line-height:35px;color:#2562c2;text-decoration:underline;text-decoration-thickness:2.5px;text-underline-offset:1.5px;">shop-backend</div>
<div id="t47" class="t " style="left:1134.51px;top:917.15px;font-size:35px;line-height:35px;color:#2562c2;text-decoration:underline;text-decoration-thickness:2.5px;text-underline-offset:1.5px;">shop-backend</div>
<svg style="position:absolute;left:1366px;top:916.9px;overflow:visible;" width="38" height="38" viewBox="0 0 38 38"><g fill="none" stroke="#2562c2" stroke-width="2.4" stroke-linecap="round" stroke-linejoin="round"><path d="M16 8.5 H6 a3 3 0 0 0 -3 3 V27.5 a3 3 0 0 0 3 3 H21 a3 3 0 0 0 3 -3 V18.5"/><path d="M12 22 L32 2 M17 2 H32 V17"/></g></svg>
<svg style="position:absolute;left:1145px;top:997.6px;" width="34" height="30" viewBox="0 0 34 30"><path d="M5 12 L14 20.8 L31 3.2" fill="none" stroke="#2f8034" stroke-width="3" stroke-linecap="round" stroke-linejoin="round" transform="translate(-1.5,2.5)"/></svg>
<svg style="position:absolute;left:1140px;top:1070px;" width="40" height="40" viewBox="0 0 40 40"><path d="M7.9 7.9 L32.2 32 M32.2 7.9 L7.9 32" fill="none" stroke="#c0281c" stroke-width="3" stroke-linecap="round"/></svg>
<svg style="position:absolute;left:1145px;top:1163px;" width="34" height="30" viewBox="0 0 34 30"><path d="M5 12 L14 20.8 L31 3.2" fill="none" stroke="#2f8034" stroke-width="3" stroke-linecap="round" stroke-linejoin="round" transform="translate(-1.5,2.5)"/></svg>
<div id="t48" class="t " style="left:1133.65px;top:1247.25px;font-size:35px;line-height:35px;color:#23262a;">35.228.38.64</div>
<div id="t49" class="t " style="left:1135.50px;top:1331.25px;font-size:35px;line-height:35px;color:#23262a;">frontendplattform-dev-2535:europe-no…</div>
<svg style="position:absolute;left:1765px;top:1320px;" width="55" height="60" viewBox="0 0 55 60"><g fill="none" stroke="#2562c2" stroke-width="2.5" stroke-linecap="round" stroke-linejoin="round"><path d="M16.3 19.9 H15.4 a2 2 0 0 0 -2 2 V45.7 a2 2 0 0 0 2 2 H30.9 a2 2 0 0 0 2 -2 V44.5"/><path d="M23 11.6 H31.1 L41.2 21.7 V37.8 a2 2 0 0 1 -2 2 H23 a2 2 0 0 1 -2 -2 V13.6 a2 2 0 0 1 2 -2 Z M30.9 11.8 V21.7 H41"/></g></svg>
<div id="t50" class="t " style="left:1134.49px;top:1413.75px;font-size:35px;line-height:35px;color:#23262a;">db-f1-micro</div>
<div id="t51" class="t " style="left:1135.50px;top:1490.25px;font-size:35px;line-height:35px;color:#23262a;">false</div>
<div id="t52" class="t " style="left:654.94px;top:1596.05px;font-size:47px;line-height:47px;color:#23262a;">Database</div>
<div id="t53" class="t " style="left:655.07px;top:1709.25px;font-size:35px;line-height:35px;color:#23262a;">Name</div>
<div id="t54" class="t " style="left:1134.53px;top:1709.25px;font-size:35px;line-height:35px;color:#23262a;">shop-backend</div>
<div id="t55" class="t " style="left:656.08px;top:1785.25px;font-size:35px;line-height:35px;color:#23262a;">Status</div>
<svg style="position:absolute;left:788.1px;top:1784.5px;" width="39" height="39" viewBox="0 0 39 39"><circle cx="19.5" cy="19.5" r="18.3" fill="none" stroke="#2562c2" stroke-width="2.3"/><path d="M14.3 15.2 a5.2 5.2 0 1 1 7.6 4.6 C19.7 21.0 19.2 22.3 19.2 24.1" fill="none" stroke="#2562c2" stroke-width="2.3" stroke-linecap="round"/><circle cx="19.2" cy="28.8" r="1.7" fill="#2562c2"/></svg>
<svg style="position:absolute;left:1145px;top:1789px;" width="34" height="30" viewBox="0 0 34 30"><path d="M5 12 L14 20.8 L31 3.2" fill="none" stroke="#2f8034" stroke-width="3" stroke-linecap="round" stroke-linejoin="round" transform="translate(-1.5,2.5)"/></svg>
<div id="t56" class="t " style="left:656.10px;top:1860.05px;font-size:35px;line-height:35px;color:#23262a;">Charset</div>
<div id="t57" class="t " style="left:1133.91px;top:1860.05px;font-size:35px;line-height:35px;color:#23262a;">UTF8</div>
<div id="t58" class="t " style="left:655.98px;top:1935.25px;font-size:35px;line-height:35px;color:#23262a;">Collation</div>
<div id="t59" class="t " style="left:1135.71px;top:1935.25px;font-size:35px;line-height:35px;color:#23262a;">en_US.UTF8</div>
<div id="t60" class="t " style="left:655.33px;top:2040.45px;font-size:47px;line-height:47px;color:#23262a;">Documentation</div>
<div style="position:absolute;left:701px;top:2163.5px;width:12px;height:12px;background:#23262a;border-radius:50%;"></div>
<div id="t61" class="t " style="left:735.04px;top:2149.75px;font-size:35px;line-height:35px;color:#2562c2;text-decoration:underline;text-decoration-thickness:2.5px;text-underline-offset:1.5px;">How to guide</div>
<svg style="position:absolute;left:950.9px;top:2149.5px;overflow:visible;" width="38" height="38" viewBox="0 0 38 38"><g fill="none" stroke="#2562c2" stroke-width="2.4" stroke-linecap="round" stroke-linejoin="round"><path d="M16 8.5 H6 a3 3 0 0 0 -3 3 V27.5 a3 3 0 0 0 3 3 H21 a3 3 0 0 0 3 -3 V18.5"/><path d="M12 22 L32 2 M17 2 H32 V17"/></g></svg>
<div style="position:absolute;left:701px;top:2211px;width:12px;height:12px;background:#23262a;border-radius:50%;"></div>
<div id="t62" class="t " style="left:735.06px;top:2197.25px;font-size:35px;line-height:35px;color:#2562c2;text-decoration:underline;text-decoration-thickness:2.5px;text-underline-offset:1.5px;">Upgrading major version</div>
<svg style="position:absolute;left:1122.5px;top:2197px;overflow:visible;" width="38" height="38" viewBox="0 0 38 38"><g fill="none" stroke="#2562c2" stroke-width="2.4" stroke-linecap="round" stroke-linejoin="round"><path d="M16 8.5 H6 a3 3 0 0 0 -3 3 V27.5 a3 3 0 0 0 3 3 H21 a3 3 0 0 0 3 -3 V18.5"/><path d="M12 22 L32 2 M17 2 H32 V17"/></g></svg>
<div style="position:absolute;left:701px;top:2259px;width:12px;height:12px;background:#23262a;border-radius:50%;"></div>
<div id="t63" class="t " style="left:736.08px;top:2245.25px;font-size:35px;line-height:35px;color:#2562c2;text-decoration:underline;text-decoration-thickness:2.5px;text-underline-offset:1.5px;">Google cost calculator</div>
<svg style="position:absolute;left:1084.3px;top:2245px;overflow:visible;" width="38" height="38" viewBox="0 0 38 38"><g fill="none" stroke="#2562c2" stroke-width="2.4" stroke-linecap="round" stroke-linejoin="round"><path d="M16 8.5 H6 a3 3 0 0 0 -3 3 V27.5 a3 3 0 0 0 3 3 H21 a3 3 0 0 0 3 -3 V18.5"/><path d="M12 22 L32 2 M17 2 H32 V17"/></g></svg>
<div style="position:absolute;left:701px;top:2306.7px;width:12px;height:12px;background:#23262a;border-radius:50%;"></div>
<div id="t64" class="t " style="left:735.02px;top:2292.95px;font-size:35px;line-height:35px;color:#2562c2;text-decoration:underline;text-decoration-thickness:2.5px;text-underline-offset:1.5px;">Deletion Protection</div>
<svg style="position:absolute;left:1042.8px;top:2292.7px;overflow:visible;" width="38" height="38" viewBox="0 0 38 38"><g fill="none" stroke="#2562c2" stroke-width="2.4" stroke-linecap="round" stroke-linejoin="round"><path d="M16 8.5 H6 a3 3 0 0 0 -3 3 V27.5 a3 3 0 0 0 3 3 H21 a3 3 0 0 0 3 -3 V18.5"/><path d="M12 22 L32 2 M17 2 H32 V17"/></g></svg>
<div id="t65" class="t " style="left:1911.50px;top:650.65px;font-size:47px;line-height:47px;color:#23262a;">Backup &amp; Maintenance</div>
<div id="t66" class="t " style="left:1927.96px;top:734.92px;font-size:29.5px;line-height:29.5px;color:#23262a;font-weight:700;">Name</div>
<div id="t67" class="t " style="left:2382.80px;top:734.92px;font-size:29.5px;line-height:29.5px;color:#23262a;font-weight:700;">Value</div>
<div style="position:absolute;left:1913px;top:778px;width:1156px;height:4px;background:#434e62;"></div>
<div style="position:absolute;left:1913px;top:783px;width:1156px;height:55px;background:#f1f2f4;"></div>
<div style="position:absolute;left:1913px;top:838px;width:1156px;height:2px;background:#36425a;"></div>
<div id="t68" class="t " style="left:1930.00px;top:794.92px;font-size:29.5px;line-height:29.5px;color:#23262a;">Automatic backups:</div>
<div id="t69" class="t " style="left:2381.31px;top:794.92px;font-size:29.5px;line-height:29.5px;color:#23262a;">Enabled</div>
<div style="position:absolute;left:1913px;top:896px;width:1156px;height:2px;background:#36425a;"></div>
<div id="t70" class="t " style="left:1927.92px;top:852.92px;font-size:29.5px;line-height:29.5px;color:#23262a;">Backup start time:</div>
<div id="t71" class="t " style="left:2382.42px;top:852.92px;font-size:29.5px;line-height:29.5px;color:#23262a;">02:00</div>
<div style="position:absolute;left:1913px;top:899px;width:1156px;height:55px;background:#f1f2f4;"></div>
<div style="position:absolute;left:1913px;top:954px;width:1156px;height:2px;background:#36425a;"></div>
<div id="t72" class="t " style="left:1927.96px;top:910.92px;font-size:29.5px;line-height:29.5px;color:#23262a;">Retained backups:</div>
<div id="t73" class="t " style="left:2382.40px;top:910.92px;font-size:29.5px;line-height:29.5px;color:#23262a;">7</div>
<div style="position:absolute;left:1913px;top:1012px;width:1156px;height:2px;background:#36425a;"></div>
<div id="t74" class="t " style="left:1927.92px;top:968.92px;font-size:29.5px;line-height:29.5px;color:#23262a;">Point in time recovery:</div>
<div id="t75" class="t " style="left:2381.32px;top:968.92px;font-size:29.5px;line-height:29.5px;color:#23262a;">Disabled</div>
<div style="position:absolute;left:1913px;top:1015px;width:1156px;height:55px;background:#f1f2f4;"></div>
<div style="position:absolute;left:1913px;top:1070px;width:1156px;height:2px;background:#36425a;"></div>
<div id="t76" class="t " style="left:1927.91px;top:1026.92px;font-size:29.5px;line-height:29.5px;color:#23262a;">Maintenance window:</div>
<div id="t77" class="t " style="left:2381.32px;top:1026.92px;font-size:29.5px;line-height:29.5px;color:#23262a;">Not specified</div>
<div style="position:absolute;left:1913px;top:1128px;width:1156px;height:2px;background:#7d8595;"></div>
<div id="t78" class="t " style="left:1927.95px;top:1084.92px;font-size:29.5px;line-height:29.5px;color:#23262a;">Maintenance version:</div>
<div id="t79" class="t " style="left:2381.51px;top:1084.92px;font-size:29.5px;line-height:29.5px;color:#23262a;">POSTGRES_14_12.R20240514.00_04</div>
<div id="t80" class="t " style="left:1910.07px;top:1186.05px;font-size:47px;line-height:47px;color:#23262a;">Instance flags</div>
<div id="t81" class="t " style="left:1927.56px;top:1270.62px;font-size:29.5px;line-height:29.5px;color:#23262a;font-weight:700;">Name</div>
<div id="t82" class="t " style="left:2849.00px;top:1270.62px;font-size:29.5px;line-height:29.5px;color:#23262a;font-weight:700;">Value</div>
<div style="position:absolute;left:1913px;top:1315px;width:1156px;height:4px;background:#434e62;"></div>
<div style="position:absolute;left:1913px;top:1320px;width:1156px;height:55px;background:#f1f2f4;"></div>
<div style="position:absolute;left:1913px;top:1375px;width:1156px;height:2px;background:#7d8595;"></div>
<div id="t83" class="t " style="left:1928.53px;top:1330.72px;font-size:29.5px;line-height:29.5px;color:#23262a;">cloudsql.iam_authentication</div>
<div id="t84" class="t " style="left:2847.90px;top:1330.72px;font-size:29.5px;line-height:29.5px;color:#23262a;">on</div>
<div id="t85" class="t " style="left:1910.21px;top:1431.75px;font-size:47px;line-height:47px;color:#23262a;">Users</div>
<div id="t86" class="t " style="left:1927.56px;top:1520.92px;font-size:29.5px;line-height:29.5px;color:#23262a;font-weight:700;">Name</div>
<div id="t87" class="t " style="left:2426.70px;top:1520.92px;font-size:29.5px;line-height:29.5px;color:#2562c2;font-weight:700;text-decoration:underline;text-decoration-thickness:2.5px;text-underline-offset:1.5px;">Authentication</div>
<svg style="position:absolute;left:2645px;top:1513px;" width="42" height="42" viewBox="0 0 42 42"><g fill="none" stroke="#2562c2" stroke-width="2.4" stroke-linecap="round" stroke-linejoin="round"><path d="M16 10 H7 a3 3 0 0 0 -3 3 V36 a3 3 0 0 0 3 3 H24 a3 3 0 0 0 3 -3 V25"/><path d="M14 28 L37 5 M22 5 H37 V20"/></g></svg>
<div style="position:absolute;left:1913px;top:1568px;width:1156px;height:4px;background:#434e62;"></div>
<div style="position:absolute;left:1913px;top:1573px;width:1156px;height:55px;background:#f1f2f4;"></div>
<div style="position:absolute;left:1913px;top:1628px;width:1156px;height:2px;background:#36425a;"></div>
<div style="position:absolute;left:1913px;top:1686px;width:1156px;height:2px;background:#7d8595;"></div>
<div id="t88" class="t " style="left:1927.53px;top:1584.52px;font-size:29.5px;line-height:29.5px;color:#23262a;">postgres</div>
<div id="t89" class="t " style="left:2426.56px;top:1584.52px;font-size:29.5px;line-height:29.5px;color:#23262a;">Built-in</div>
<div id="t90" class="t " style="left:1928.57px;top:1642.42px;font-size:29.5px;line-height:29.5px;color:#23262a;">shop-backend</div>
<div id="t91" class="t " style="left:2426.56px;top:1642.42px;font-size:29.5px;line-height:29.5px;color:#23262a;">Built-in</div>
</div>
<div style="position:absolute;left:112px;top:76px;width:3118px;height:2284px;box-sizing:border-box;border:2px solid rgba(255,255,255,0.17);border-top-color:rgba(255,255,255,0.36);border-radius:20px;pointer-events:none;"></div>
</body></html>
